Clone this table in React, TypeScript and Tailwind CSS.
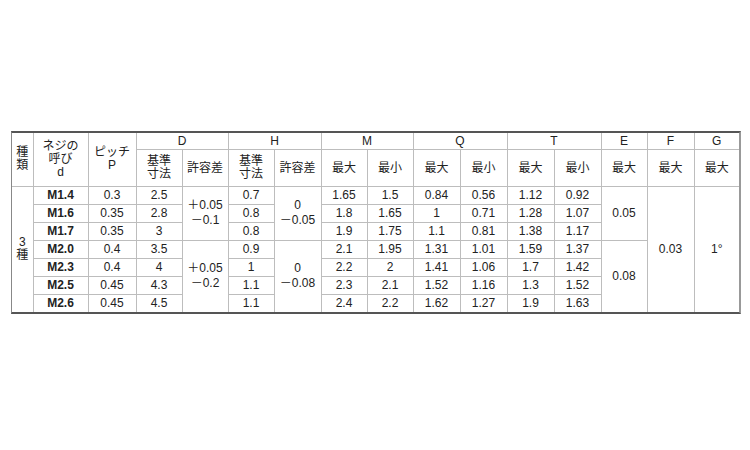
import React from 'react'

type Row = {
  size: string
  pitch: string
  dBase: string
  hBase: string
  mMax: string
  mMin: string
  qMax: string
  qMin: string
  tMax: string
  tMin: string
}

const rows: Row[] = [
  { size: 'M1.4', pitch: '0.3', dBase: '2.5', hBase: '0.7', mMax: '1.65', mMin: '1.5', qMax: '0.84', qMin: '0.56', tMax: '1.12', tMin: '0.92' },
  { size: 'M1.6', pitch: '0.35', dBase: '2.8', hBase: '0.8', mMax: '1.8', mMin: '1.65', qMax: '1', qMin: '0.71', tMax: '1.28', tMin: '1.07' },
  { size: 'M1.7', pitch: '0.35', dBase: '3', hBase: '0.8', mMax: '1.9', mMin: '1.75', qMax: '1.1', qMin: '0.81', tMax: '1.38', tMin: '1.17' },
  { size: 'M2.0', pitch: '0.4', dBase: '3.5', hBase: '0.9', mMax: '2.1', mMin: '1.95', qMax: '1.31', qMin: '1.01', tMax: '1.59', tMin: '1.37' },
  { size: 'M2.3', pitch: '0.4', dBase: '4', hBase: '1', mMax: '2.2', mMin: '2', qMax: '1.41', qMin: '1.06', tMax: '1.7', tMin: '1.42' },
  { size: 'M2.5', pitch: '0.45', dBase: '4.3', hBase: '1.1', mMax: '2.3', mMin: '2.1', qMax: '1.52', qMin: '1.16', tMax: '1.3', tMin: '1.52' },
  { size: 'M2.6', pitch: '0.45', dBase: '4.5', hBase: '1.1', mMax: '2.4', mMin: '2.2', qMax: '1.62', qMin: '1.27', tMax: '1.9', tMin: '1.63' },
]

const colWidths = [21, 55, 48, 46, 46, 46, 47, 46, 46, 47, 47, 47, 47, 46, 47, 45]

const cell = 'border border-[#bdbdbd] text-center align-middle p-0'
const head = `${cell} font-normal`

// two-line tolerance, e.g. ＋0.05 over －0.1
const Tol = ({ top, bottom }: { top: string; bottom: string }) => (
  <div className="flex flex-col items-center leading-[15px]">
    <span>{top}</span>
    <span>{bottom}</span>
  </div>
)

const Stack = ({ lines }: { lines: string[] }) => (
  <div className="flex flex-col items-center leading-[13px]">
    {lines.map((l) => (
      <span key={l}>{l}</span>
    ))}
  </div>
)

export default function App() {
  return (
    <div className="w-[750px] h-[450px] bg-white pt-[131px] pl-[11px] text-[#222] font-['Liberation_Sans','Noto_Sans_CJK_JP',sans-serif]">
      <div className="w-[730px] border-t-2 border-b-2 border-l border-r-2 border-t-[#555] border-b-[#555] border-l-[#888] border-r-[#999]">
        <table className="w-[727px] table-fixed border-collapse border-hidden text-[12px] leading-[14px]">
          <colgroup>
            {colWidths.map((w, i) => (
              <col key={i} style={{ width: w }} />
            ))}
          </colgroup>
          <thead>
            <tr className="h-[16px]">
              <th rowSpan={2} className={head}>
                <Stack lines={['種', '類']} />
              </th>
              <th rowSpan={2} className={head}>
                <Stack lines={['ネジの', '呼び', 'd']} />
              </th>
              <th rowSpan={2} className={head}>
                <Stack lines={['ピッチ', 'P']} />
              </th>
              <th colSpan={2} className={head}>D</th>
              <th colSpan={2} className={head}>H</th>
              <th colSpan={2} className={head}>M</th>
              <th colSpan={2} className={head}>Q</th>
              <th colSpan={2} className={head}>T</th>
              <th className={head}>E</th>
              <th className={head}>F</th>
              <th className={head}>G</th>
            </tr>
            <tr className="h-[37px]">
              <th className={head}>
                <Stack lines={['基準', '寸法']} />
              </th>
              <th className={head}>許容差</th>
              <th className={head}>
                <Stack lines={['基準', '寸法']} />
              </th>
              <th className={head}>許容差</th>
              <th className={head}>最大</th>
              <th className={head}>最小</th>
              <th className={head}>最大</th>
              <th className={head}>最小</th>
              <th className={head}>最大</th>
              <th className={head}>最小</th>
              <th className={head}>最大</th>
              <th className={head}>最大</th>
              <th className={head}>最大</th>
            </tr>
          </thead>
          <tbody>
            {rows.map((r, i) => (
              <tr key={r.size} className="h-[18px]">
                {i === 0 && (
                  <td rowSpan={7} className={cell}>
                    <Stack lines={['3', '種']} />
                  </td>
                )}
                <td className={`${cell} font-bold`}>{r.size}</td>
                <td className={cell}>{r.pitch}</td>
                <td className={cell}>{r.dBase}</td>
                {i === 0 && (
                  <td rowSpan={3} className={cell}>
                    <Tol top="＋0.05" bottom="－0.1" />
                  </td>
                )}
                {i === 3 && (
                  <td rowSpan={4} className={cell}>
                    <Tol top="＋0.05" bottom="－0.2" />
                  </td>
                )}
                <td className={cell}>{r.hBase}</td>
                {i === 0 && (
                  <td rowSpan={3} className={cell}>
                    <Tol top="0" bottom="－0.05" />
                  </td>
                )}
                {i === 3 && (
                  <td rowSpan={4} className={cell}>
                    <Tol top="0" bottom="－0.08" />
                  </td>
                )}
                <td className={cell}>{r.mMax}</td>
                <td className={cell}>{r.mMin}</td>
                <td className={cell}>{r.qMax}</td>
                <td className={cell}>{r.qMin}</td>
                <td className={cell}>{r.tMax}</td>
                <td className={cell}>{r.tMin}</td>
                {i === 0 && (
                  <td rowSpan={3} className={cell}>0.05</td>
                )}
                {i === 3 && (
                  <td rowSpan={4} className={cell}>0.08</td>
                )}
                {i === 0 && (
                  <>
                    <td rowSpan={7} className={cell}>0.03</td>
                    <td rowSpan={7} className={cell}>1°</td>
                  </>
                )}
              </tr>
            ))}
          </tbody>
        </table>
      </div>
    </div>
  )
}
